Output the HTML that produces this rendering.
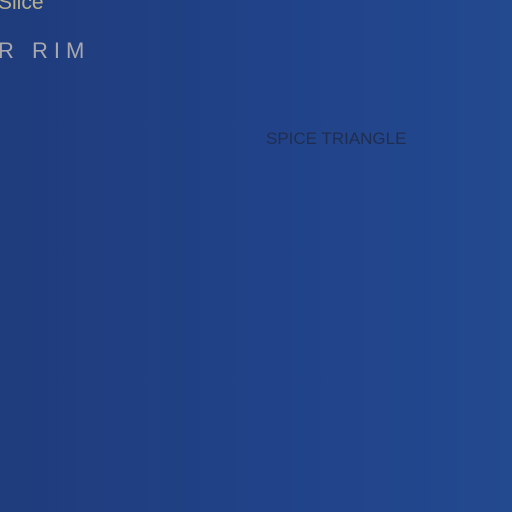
<!DOCTYPE html>
<html><head><style>
html,body{margin:0;padding:0}
body{width:512px;height:512px;overflow:hidden;position:relative;background:linear-gradient(90deg,#1f3c7c 0%,#21438a 60%,#23498f 100%);font-family:"Liberation Sans",sans-serif}
.t{position:absolute;white-space:nowrap}
</style></head><body>
<div class="t" style="left:-2px;top:-9px;font-size:21px;color:#b7b08f">Slice</div>
<div class="t" style="left:-2px;top:38px;font-size:22px;letter-spacing:6px;color:#a8a9b0">R RIM</div>
<div class="t" style="left:266px;top:129px;font-size:17px;color:#1f2e50">SPICE TRIANGLE</div>
</body></html>
